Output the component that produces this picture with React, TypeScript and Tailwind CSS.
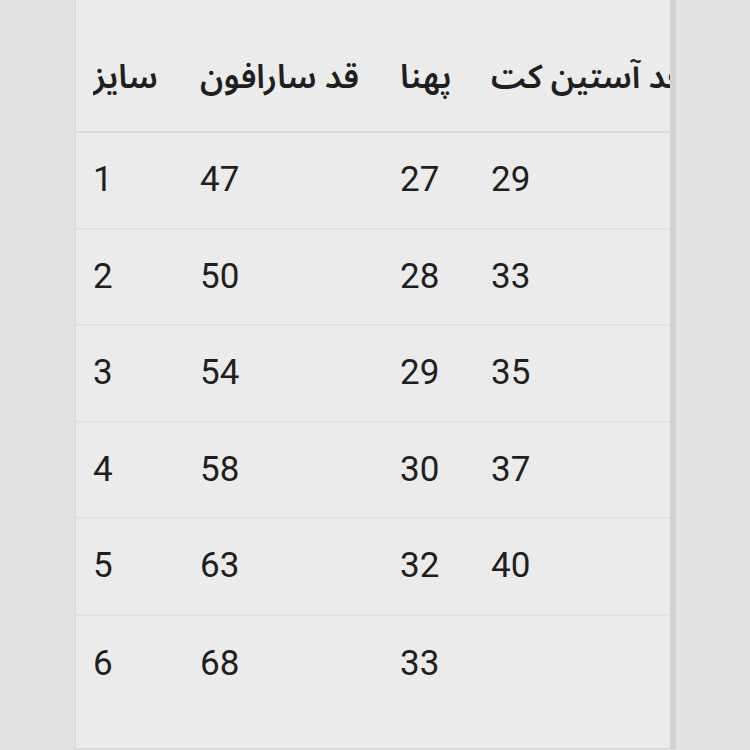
const HEADERS = ["سایز", "قد سارافون", "پهنا", "قد آستین کت"];

const ROWS = [
  ["1", "47", "27", "29"],
  ["2", "50", "28", "33"],
  ["3", "54", "29", "35"],
  ["4", "58", "30", "37"],
  ["5", "63", "32", "40"],
  ["6", "68", "33", ""],
];

const COLS = "grid grid-cols-[107px_200px_91px_1fr] pl-[17px]";

export default function App() {
  return (
    <div className="w-[750px] h-[750px] bg-[#e2e2e2] flex overflow-hidden font-['Roboto','Noto_Sans_Arabic','DejaVu_Sans',sans-serif] text-[#1f1f1f]">
      <div className="ml-[75px] w-[601px] h-[749px] bg-[#ebebeb] border-l border-b border-[#d6d6d6] border-r-[6px] border-r-[#d3d3d3] overflow-hidden">
        {/* Header — last column is clipped by the panel edge, as in the source */}
        <div className={`${COLS} h-[133px] items-center border-b-2 border-[#dadada] pt-[22px]`}>
          {HEADERS.map((h, i) => (
            <div key={i} className="whitespace-nowrap text-[33px] font-semibold overflow-hidden">
              <span dir="rtl">{h}</span>
            </div>
          ))}
        </div>

        {/* Rows */}
        {ROWS.map((row, i) => (
          <div
            key={i}
            className={`${COLS} h-[96.5px] items-center text-[35px] ${i < ROWS.length - 1 ? "border-b-2 border-[#e2e2e2]" : ""}`}
          >
            {row.map((c, j) => (
              <div key={j}>{c}</div>
            ))}
          </div>
        ))}
      </div>
    </div>
  );
}
